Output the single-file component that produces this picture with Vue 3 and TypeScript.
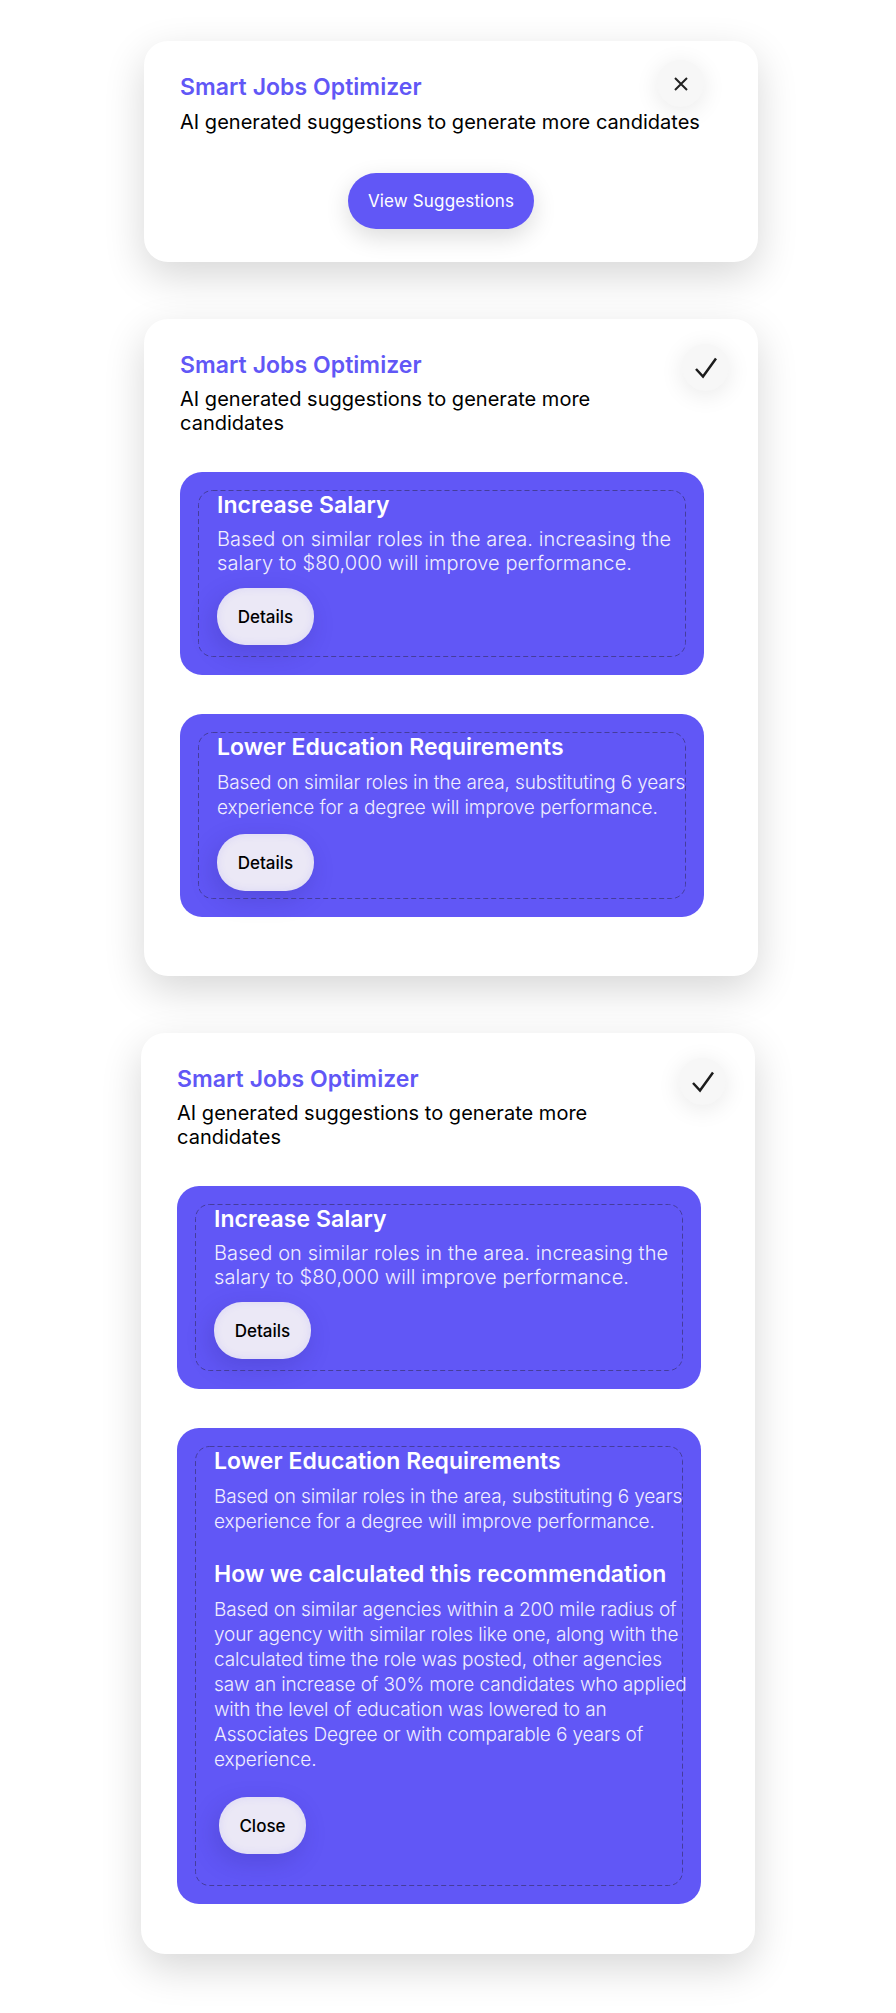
<script setup lang="ts">
interface Suggestion {
  title: string
  text: string
}

const salary: Suggestion = {
  title: 'Increase Salary',
  text: 'Based on similar roles in the area. increasing the salary to $80,000 will improve performance.',
}

const education: Suggestion = {
  title: 'Lower Education Requirements',
  text: 'Based on similar roles in the area, substituting 6 years experience for a degree will improve performance.',
}

const subtitle = 'AI generated suggestions to generate more candidates'
</script>

<template>
  <div class="page">
    <section class="card card-closed">
      <h1 class="title">Smart Jobs Optimizer</h1>
      <p class="subtitle">{{ subtitle }}</p>
      <button class="round-btn close-btn" aria-label="Close">
        <svg width="14" height="14" viewBox="0 0 14 14" fill="none">
          <path d="M1 1l12 12M13 1L1 13" stroke="#222" stroke-width="2" />
        </svg>
      </button>
      <button class="view-btn">View Suggestions</button>
    </section>

    <section class="card card-open">
      <header class="head">
        <div class="head-text">
          <h1 class="title">Smart Jobs Optimizer</h1>
          <p class="subtitle">{{ subtitle }}</p>
        </div>
        <button class="round-btn" aria-label="Done">
          <svg width="22" height="22" viewBox="0 0 22 22" fill="none">
            <path d="M1 12l7 7.5L21 1.5" stroke="#1c1c1c" stroke-width="2.5" />
          </svg>
        </button>
      </header>
      <div class="panel">
        <div class="dashed">
          <svg class="dash-line"><rect class="dash-rect" x="0.5" y="0.5" rx="14" /></svg>
          <h2 class="panel-title">{{ salary.title }}</h2>
          <p class="panel-text">{{ salary.text }}</p>
          <button class="pill">Details</button>
        </div>
      </div>
      <div class="panel">
        <div class="dashed">
          <svg class="dash-line"><rect class="dash-rect" x="0.5" y="0.5" rx="14" /></svg>
          <h2 class="panel-title">{{ education.title }}</h2>
          <p class="panel-text tight">{{ education.text }}</p>
          <button class="pill pill-low">Details</button>
        </div>
      </div>
    </section>

    <section class="card card-open card-expanded">
      <header class="head">
        <div class="head-text">
          <h1 class="title">Smart Jobs Optimizer</h1>
          <p class="subtitle">{{ subtitle }}</p>
        </div>
        <button class="round-btn" aria-label="Done">
          <svg width="22" height="22" viewBox="0 0 22 22" fill="none">
            <path d="M1 12l7 7.5L21 1.5" stroke="#1c1c1c" stroke-width="2.5" />
          </svg>
        </button>
      </header>
      <div class="panel">
        <div class="dashed">
          <svg class="dash-line"><rect class="dash-rect" x="0.5" y="0.5" rx="14" /></svg>
          <h2 class="panel-title">{{ salary.title }}</h2>
          <p class="panel-text">{{ salary.text }}</p>
          <button class="pill">Details</button>
        </div>
      </div>
      <div class="panel">
        <div class="dashed dashed-long">
          <svg class="dash-line"><rect class="dash-rect" x="0.5" y="0.5" rx="14" /></svg>
          <h2 class="panel-title">{{ education.title }}</h2>
          <p class="panel-text tight">{{ education.text }}</p>
          <h2 class="panel-title how">How we calculated this recommendation</h2>
          <p class="panel-text tight">
            Based on similar agencies within a 200 mile radius of your agency with similar roles like one, along with the
            calculated time the role was posted, other agencies saw an increase of 30% more candidates who applied
            with the level of education was lowered to an Associates Degree or with comparable 6 years of experience.
          </p>
          <button class="pill pill-close">Close</button>
        </div>
      </div>
    </section>
  </div>
</template>

<style>
body {
  background: #fff;
}
</style>

<style scoped>
.page {
  height: 2013px;
  box-sizing: border-box;
  padding: 41px 0 0 141px;
  display: flex;
  flex-direction: column;
  align-items: flex-start;
  gap: 57px;
  font-family: Inter, "Liberation Sans", sans-serif;
  overflow: hidden;
}

.card {
  position: relative;
  width: 614px;
  box-sizing: border-box;
  margin-left: 3px;
  padding: 31px 36px 0;
  background: #fff;
  border-radius: 24px;
  box-shadow: 0 14px 40px rgba(0, 0, 0, 0.16);
}

.card-closed {
  height: 221px;
}

.card-open {
  height: 657px;
}

.card-expanded {
  height: 921px;
  margin-left: 0;
}

.title {
  margin: 0;
  font-size: 23px;
  line-height: 30px;
  font-weight: 600;
  letter-spacing: 0.05px;
  color: #6157f6;
}

.subtitle {
  margin: 8px 0 0;
  font-size: 20px;
  line-height: 24px;
  font-weight: 400;
  letter-spacing: 0.02px;
  color: #000;
}

.head {
  display: flex;
  align-items: flex-start;
  gap: 10px;
}

.head-text {
  flex: 1;
}

.head .subtitle {
  margin-top: 7px;
}

.round-btn {
  flex: none;
  width: 47px;
  height: 47px;
  margin: -6px -7px 0 0;
  padding: 0;
  display: flex;
  align-items: center;
  justify-content: center;
  border: none;
  border-radius: 50%;
  background: #f7f7f7;
  box-shadow: 0 4px 24px rgba(0, 0, 0, 0.09);
}

.close-btn {
  position: absolute;
  top: 19px;
  right: 54px;
  margin: 0;
}

.view-btn {
  display: block;
  width: 186px;
  height: 56px;
  margin: 39px 0 0 168px;
  padding: 0;
  border: none;
  border-radius: 28px;
  background: #6157f6;
  color: #fff;
  font: 400 17px Inter, sans-serif;
  letter-spacing: 0.15px;
  box-shadow: 0 8px 24px rgba(0, 0, 0, 0.14);
}

.panel {
  width: 524px;
  box-sizing: border-box;
  margin-top: 37px;
  padding: 18px;
  border-radius: 22px;
  background: #6157f6;
}

.panel + .panel {
  margin-top: 39px;
}

.dashed {
  position: relative;
  box-sizing: border-box;
  height: 167px;
  padding: 1px 0 0 19px;
}

.dashed-long {
  height: 440px;
}

.dash-line {
  position: absolute;
  top: 0;
  left: 0;
  width: 100%;
  height: 100%;
  pointer-events: none;
}

.dash-rect {
  width: calc(100% - 1px);
  height: calc(100% - 1px);
  fill: none;
  stroke: #453d9c;
  stroke-width: 1;
  stroke-dasharray: 5 3;
}

.panel-title {
  margin: 0;
  font-size: 23px;
  line-height: 28px;
  font-weight: 600;
  letter-spacing: 0.05px;
  color: #fff;
}

.panel-text {
  margin: 8px 0 0;
  font-size: 20px;
  line-height: 24px;
  font-weight: 300;
  letter-spacing: 0.1px;
  color: #f0eefe;
}

.tight {
  margin-top: 9px;
  margin-right: -8px;
  font-size: 19px;
  line-height: 25px;
  letter-spacing: -0.12px;
}

.how {
  margin-top: 26px;
}

.pill {
  display: block;
  width: 97px;
  height: 57px;
  margin-top: 13px;
  padding: 0;
  border: none;
  border-radius: 28px;
  background: #ebe8f6;
  color: #000;
  font: 500 17px Inter, sans-serif;
  box-shadow: inset 0 0 8px rgba(97, 87, 246, 0.12), -4px 8px 24px rgba(40, 30, 130, 0.22);
}

.pill-low {
  margin-top: 14px;
}

.pill-close {
  width: 87px;
  margin: 25px 0 0 5px;
}
</style>
